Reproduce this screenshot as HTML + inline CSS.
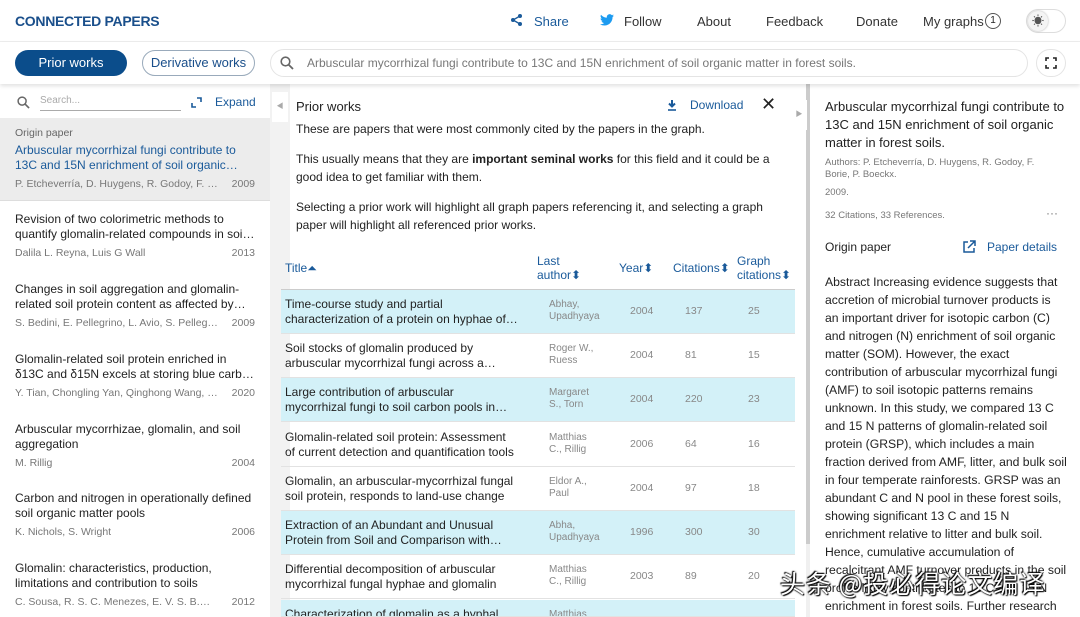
<!DOCTYPE html>
<html style="overflow:hidden;height:617px"><head><meta charset="utf-8"><style>
*{box-sizing:border-box;margin:0;padding:0}
body{width:1080px;height:617px;overflow:hidden;font-family:"Liberation Sans","Noto Sans CJK SC",sans-serif;background:#fff;position:relative;color:#222}
.abs{position:absolute}
.hdr{left:0;top:0;width:1080px;height:42px;background:#fff;border-bottom:1px solid #eee}
.logo{left:15px;top:13px;font-weight:bold;font-size:14px;color:#1a4f8b;letter-spacing:-0.3px}
.nav{top:14px;font-size:13px;color:#333}
.bar{left:0;top:42px;width:1080px;height:42px;background:#fff;box-shadow:0 2px 4px rgba(0,0,0,.12);z-index:2}
.btn1{left:15px;top:50px;width:112px;height:26px;border-radius:13px;background:#0b4d8b;color:#fff;font-size:13px;text-align:center;line-height:26px;z-index:3}
.btn2{left:142px;top:50px;width:113px;height:26px;border-radius:13px;border:1px solid #9ab;color:#1a4f8b;font-size:13px;text-align:center;line-height:24px;z-index:3}
.search{left:270px;top:49px;width:758px;height:28px;border-radius:14px;border:1px solid #e4e4e4;font-size:12px;color:#777;line-height:26px;padding-left:36px;z-index:3}
.left{left:0;top:84px;width:270px;height:533px;background:#fff}
.strip{left:270px;top:84px;width:20px;height:533px;background:#f2f2f2}
.mid{left:290px;top:84px;width:516px;height:533px;background:#fff}
.right{left:810px;top:84px;width:270px;height:533px;background:#fff}
.item{position:absolute;left:15px;width:240px;font-size:12px;line-height:14.5px;color:#222}
.item .a{font-size:10.5px;color:#777;margin-top:5px;display:flex;justify-content:space-between;white-space:nowrap}
.item .a span:first-child{overflow:hidden;text-overflow:ellipsis;max-width:205px}
.row{position:absolute;left:281px;width:514px;height:44px;border-bottom:1px solid #e2e2e2;font-size:12px;overflow:hidden}
.row.h{background:#d3f1f8}
.row .t{position:absolute;left:4px;top:7px;width:250px;line-height:14.5px;color:#222;white-space:nowrap}
.row .au{position:absolute;left:268px;top:9px;font-size:10px;color:#888;line-height:12px;width:50px}
.row .y{position:absolute;left:349px;top:15px;font-size:10.5px;color:#888}
.row .c{position:absolute;left:404px;top:15px;font-size:10.5px;color:#888}
.row .g{position:absolute;left:467px;top:15px;font-size:10.5px;color:#888}
.th{position:absolute;font-size:12px;color:#1a5a9a;line-height:14px}
p.m{position:absolute;left:296px;width:480px;font-size:12px;line-height:18px;color:#222}
</style></head><body>
<div class="abs hdr"></div>
<div class="abs logo">CONNECTED PAPERS</div>
<svg class="abs" style="left:510px;top:13px" width="14" height="14" viewBox="0 0 14 14"><circle cx="10" cy="3" r="2" fill="#1a5a9a"/><circle cx="3" cy="7" r="2" fill="#1a5a9a"/><circle cx="10" cy="11" r="2" fill="#1a5a9a"/><path d="M10 3L3 7L10 11" stroke="#1a5a9a" stroke-width="1.3" fill="none"/></svg>
<div class="abs nav" style="left:534px;color:#1a5a9a">Share</div>
<svg class="abs" style="left:600px;top:14px" width="14" height="12" viewBox="0 0 24 20"><path d="M24 2.4a10 10 0 0 1-2.8.8A5 5 0 0 0 23.3.5a10 10 0 0 1-3.1 1.2A4.9 4.9 0 0 0 11.8 6 14 14 0 0 1 1.7.9a4.9 4.9 0 0 0 1.5 6.6A4.9 4.9 0 0 1 1 6.9a4.9 4.9 0 0 0 3.9 4.8 5 5 0 0 1-2.2.1 4.9 4.9 0 0 0 4.6 3.4A9.9 9.9 0 0 1 0 17.3 14 14 0 0 0 7.5 19.5c9 0 14-7.5 14-14v-.6A10 10 0 0 0 24 2.4z" fill="#1d9bf0"/></svg>
<div class="abs nav" style="left:624px">Follow</div>
<div class="abs nav" style="left:697px">About</div>
<div class="abs nav" style="left:766px">Feedback</div>
<div class="abs nav" style="left:856px">Donate</div>
<div class="abs nav" style="left:923px">My graphs</div>
<div class="abs" style="left:985px;top:13px;width:16px;height:16px;border:1px solid #555;border-radius:50%;font-size:10px;text-align:center;line-height:14px">1</div>
<div class="abs" style="left:1026px;top:9px;width:40px;height:24px;border:1px solid #ddd;border-radius:12px"></div>
<div class="abs" style="left:1028px;top:11px;width:20px;height:20px;border-radius:50%;background:#f4f4f4;box-shadow:0 0 2px #aaa;text-align:center;font-size:12px;line-height:20px;color:#555">☀</div>
<div class="abs bar"></div>
<div class="abs btn1">Prior works</div>
<div class="abs btn2">Derivative works</div>
<div class="abs search">Arbuscular mycorrhizal fungi contribute to 13C and 15N enrichment of soil organic matter in forest soils.</div>
<svg class="abs" style="left:280px;top:56px;z-index:4" width="14" height="14" viewBox="0 0 14 14"><circle cx="5.5" cy="5.5" r="4.3" stroke="#666" stroke-width="1.6" fill="none"/><path d="M8.7 8.7L13 13" stroke="#666" stroke-width="1.8"/></svg>
<div class="abs" style="left:1036px;top:49px;width:30px;height:28px;border-radius:14px;border:1px solid #e4e4e4;z-index:3"></div>
<svg class="abs" style="left:1045px;top:57px;z-index:4" width="12" height="12" viewBox="0 0 12 12"><path d="M1 4V1h3M8 1h3v3M11 8v3H8M4 11H1V8" stroke="#222" stroke-width="1.6" fill="none"/></svg>

<div class="abs left"></div>
<div class="abs" style="left:0;top:84px;width:270px;height:34px;background:#fff;box-shadow:0 2px 3px rgba(0,0,0,.08)"></div>
<svg class="abs" style="left:17px;top:96px" width="13" height="13" viewBox="0 0 14 14"><circle cx="5.5" cy="5.5" r="4.3" stroke="#666" stroke-width="1.6" fill="none"/><path d="M8.7 8.7L13 13" stroke="#666" stroke-width="1.8"/></svg>
<div class="abs" style="left:40px;top:95px;width:141px;height:16px;border-bottom:1px solid #aaa;font-size:10px;color:#aaa">Search...</div>
<svg class="abs" style="left:191px;top:97px" width="11" height="11" viewBox="0 0 11 11"><path d="M1 6v4h4M6 1h4v4" stroke="#1a5a9a" stroke-width="1.6" fill="none"/></svg>
<div class="abs" style="left:215px;top:95px;font-size:12px;color:#1a5a9a">Expand</div>
<div class="abs" style="left:0;top:118px;width:270px;height:83px;background:#ececec;border-bottom:1px solid #ddd"></div>
<div class="abs" style="left:15px;top:127px;font-size:10.5px;color:#666">Origin paper</div>
<div class="item" style="top:143px;color:#1a5a9a">Arbuscular mycorrhizal fungi contribute to 13C and 15N enrichment of soil organic…<div class="a"><span>P. Etcheverría, D. Huygens, R. Godoy, F. Borie,…</span><span>2009</span></div></div>
<div class="item" style="top:212px">Revision of two colorimetric methods to quantify glomalin-related compounds in soi…<div class="a"><span>Dalila L. Reyna, Luis G Wall</span><span>2013</span></div></div>
<div class="item" style="top:282px">Changes in soil aggregation and glomalin-related soil protein content as affected by…<div class="a"><span>S. Bedini, E. Pellegrino, L. Avio, S. Pellegrini, P…</span><span>2009</span></div></div>
<div class="item" style="top:352px">Glomalin-related soil protein enriched in δ13C and δ15N excels at storing blue carb…<div class="a"><span>Y. Tian, Chongling Yan, Qinghong Wang, W…</span><span>2020</span></div></div>
<div class="item" style="top:422px">Arbuscular mycorrhizae, glomalin, and soil aggregation<div class="a"><span>M. Rillig</span><span>2004</span></div></div>
<div class="item" style="top:491px">Carbon and nitrogen in operationally defined soil organic matter pools<div class="a"><span>K. Nichols, S. Wright</span><span>2006</span></div></div>
<div class="item" style="top:561px">Glomalin: characteristics, production, limitations and contribution to soils<div class="a"><span>C. Sousa, R. S. C. Menezes, E. V. S. B.…</span><span>2012</span></div></div>

<div class="abs strip"></div>
<div class="abs" style="left:272px;top:92px;width:16px;height:30px;background:#fff;font-size:7px;color:#aaa;text-align:center;line-height:30px">◀</div>
<div class="abs mid"></div>
<div class="abs" style="left:806px;top:84px;width:4px;height:533px;background:#f0f0f0"></div>
<div class="abs" style="left:806px;top:84px;width:4px;height:460px;background:#ccc"></div>
<div class="abs" style="left:791px;top:100px;width:16px;height:30px;background:#fff;font-size:7px;color:#aaa;text-align:center;line-height:30px">▶</div>
<div class="abs" style="left:296px;top:99px;font-size:13px;color:#222">Prior works</div>
<svg class="abs" style="left:666px;top:99px" width="12" height="12" viewBox="0 0 12 12"><path d="M6 1v6M3 4.5L6 7.5 9 4.5" stroke="#1a5a9a" stroke-width="2" fill="none"/><path d="M2 11h8" stroke="#1a5a9a" stroke-width="1.6"/></svg>
<div class="abs" style="left:690px;top:98px;font-size:12px;color:#1a5a9a">Download</div>
<div class="abs" style="left:761px;top:94px;font-size:18px;color:#222">✕</div>
<p class="m" style="top:120px">These are papers that were most commonly cited by the papers in the graph.</p>
<p class="m" style="top:150px">This usually means that they are <b>important seminal works</b> for this field and it could be a good idea to get familiar with them.</p>
<p class="m" style="top:198px">Selecting a prior work will highlight all graph papers referencing it, and selecting a graph paper will highlight all referenced prior works.</p>
<div class="th" style="left:285px;top:261px">Title⏶</div>
<div class="th" style="left:537px;top:254px">Last<br>author⬍</div>
<div class="th" style="left:619px;top:261px">Year⬍</div>
<div class="th" style="left:673px;top:261px">Citations⬍</div>
<div class="th" style="left:737px;top:254px">Graph<br>citations⬍</div>
<div class="abs" style="left:281px;top:289px;width:514px;height:1px;background:#ccc"></div>
<div class="row h" style="top:290px"><div class="t">Time-course study and partial<br>characterization of a protein on hyphae of…</div><div class="au">Abhay, Upadhyaya</div><div class="y">2004</div><div class="c">137</div><div class="g">25</div></div>
<div class="row" style="top:334px"><div class="t">Soil stocks of glomalin produced by<br>arbuscular mycorrhizal fungi across a…</div><div class="au">Roger W., Ruess</div><div class="y">2004</div><div class="c">81</div><div class="g">15</div></div>
<div class="row h" style="top:378px"><div class="t">Large contribution of arbuscular<br>mycorrhizal fungi to soil carbon pools in…</div><div class="au">Margaret S., Torn</div><div class="y">2004</div><div class="c">220</div><div class="g">23</div></div>
<div class="row" style="top:423px"><div class="t">Glomalin-related soil protein: Assessment<br>of current detection and quantification tools</div><div class="au">Matthias C., Rillig</div><div class="y">2006</div><div class="c">64</div><div class="g">16</div></div>
<div class="row" style="top:467px"><div class="t">Glomalin, an arbuscular-mycorrhizal fungal<br>soil protein, responds to land-use change</div><div class="au">Eldor A., Paul</div><div class="y">2004</div><div class="c">97</div><div class="g">18</div></div>
<div class="row h" style="top:511px"><div class="t">Extraction of an Abundant and Unusual<br>Protein from Soil and Comparison with…</div><div class="au">Abha, Upadhyaya</div><div class="y">1996</div><div class="c">300</div><div class="g">30</div></div>
<div class="row" style="top:555px"><div class="t">Differential decomposition of arbuscular<br>mycorrhizal fungal hyphae and glomalin</div><div class="au">Matthias C., Rillig</div><div class="y">2003</div><div class="c">89</div><div class="g">20</div></div>
<div class="row h" style="top:600px;height:17px"><div class="t">Characterization of glomalin as a hyphal</div><div class="au">Matthias</div></div>

<div class="abs right"></div>
<div class="abs" style="left:825px;top:98px;width:240px;font-size:13px;line-height:18px;color:#222">Arbuscular mycorrhizal fungi contribute to 13C and 15N enrichment of soil organic matter in forest soils.</div>
<div class="abs" style="left:825px;top:157px;width:230px;font-size:9.5px;line-height:12px;color:#777">Authors: P. Etcheverría, D. Huygens, R. Godoy, F. Borie, P. Boeckx.</div>
<div class="abs" style="left:825px;top:187px;font-size:9.5px;color:#777">2009.</div>
<div class="abs" style="left:825px;top:210px;font-size:9.5px;color:#777">32 Citations, 33 References.</div>
<div class="abs" style="left:1046px;top:206px;font-size:12px;color:#777">···</div>
<div class="abs" style="left:825px;top:240px;font-size:12px;color:#222">Origin paper</div>
<svg class="abs" style="left:962px;top:240px" width="14" height="14" viewBox="0 0 14 14"><path d="M6 2H2v10h10V8" stroke="#1a5a9a" stroke-width="1.5" fill="none"/><path d="M8 1h5v5M13 1L6 8" stroke="#1a5a9a" stroke-width="1.5" fill="none"/></svg>
<div class="abs" style="left:987px;top:240px;font-size:12px;color:#1a5a9a">Paper details</div>
<div class="abs" style="left:825px;top:273px;width:242px;font-size:12.2px;line-height:18px;color:#222">Abstract Increasing evidence suggests that accretion of microbial turnover products is an important driver for isotopic carbon (C) and nitrogen (N) enrichment of soil organic matter (SOM). However, the exact contribution of arbuscular mycorrhizal fungi (AMF) to soil isotopic patterns remains unknown. In this study, we compared 13 C and 15 N patterns of glomalin-related soil protein (GRSP), which includes a main fraction derived from AMF, litter, and bulk soil in four temperate rainforests. GRSP was an abundant C and N pool in these forest soils, showing significant 13 C and 15 N enrichment relative to litter and bulk soil. Hence, cumulative accumulation of recalcitrant AMF turnover products in the soil profile likely contributes to 13 C and 15 N enrichment in forest soils. Further research</div>
<div class="abs" style="left:780px;top:565px;font-size:25px;color:#fff;font-family:'Noto Sans CJK SC',sans-serif;text-shadow:0 0 2px #000,1px 1px 1px #000,-1px -1px 1px #000;letter-spacing:1px">头条 @投必得论文编译</div>
</body></html>
